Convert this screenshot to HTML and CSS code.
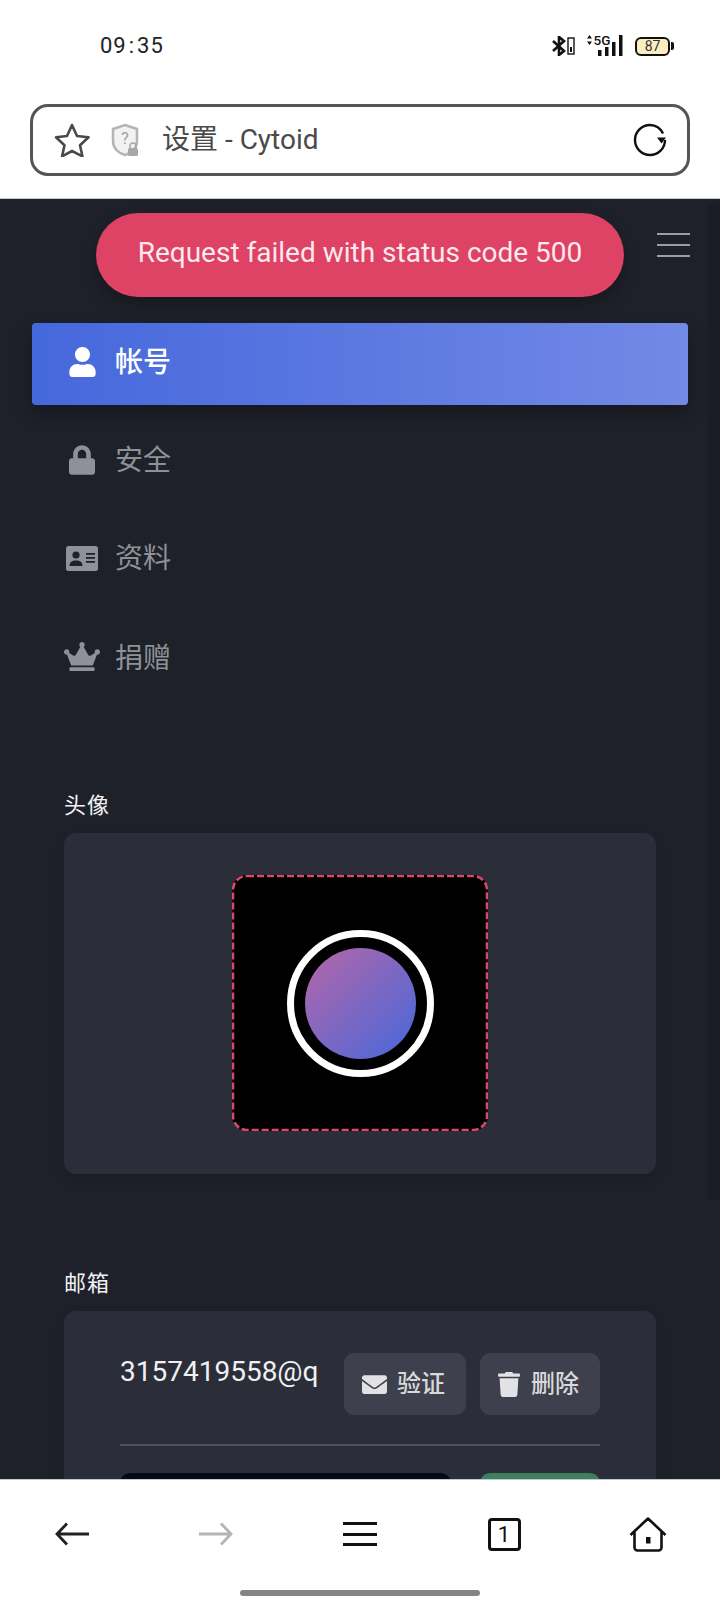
FILE: index.html
```html
<!DOCTYPE html>
<html lang="zh">
<head>
<meta charset="utf-8">
<title>设置 - Cytoid</title>
<link rel="stylesheet" href="styles.css">
</head>
<body>
<div class="phone">
  <header class="chrome">
    <div class="status">
      <span class="time">09<span class="colon">:</span>35</span>
      <div class="status-icons">
        <svg class="ic-bt" viewBox="0 0 24 20"><path d="M1 5l11 10-5 4V1l5 4L1 15" fill="none" stroke="#111" stroke-width="2.600"/><rect x="16" y="2" width="6" height="16" fill="none" stroke="#111" stroke-width="1.400"/><rect x="18" y="11" width="2" height="5" fill="#111"/></svg>
        <svg class="ic-sig" viewBox="0 -4 38 26"><path d="M1 4.500l2.500-3.500L6 4.500zM1 7.500l2.500 3.500L6 7.500z" fill="#111"/><text x="7.500" y="10.500" class="sig-text">5G</text><rect x="12" y="16" width="3.500" height="6" fill="#111"/><rect x="19" y="13" width="3.500" height="9" fill="#111"/><rect x="26" y="8" width="3.500" height="14" fill="#111"/><rect x="33" y="1" width="3.500" height="21" fill="#111"/></svg>
        <div class="battery"><span class="batt-body">87</span><span class="batt-nub"></span></div>
      </div>
    </div>
    <div class="urlbar">
      <svg class="ic-star" viewBox="0 0 36 34"><path d="M18 2l5 11 11.500 1.300-8.500 8 2.400 11L18 28l-9.900 5.300 2.400-11-8.500-8L13 13z" fill="none" stroke="#4a4a4a" stroke-width="2.600" stroke-linejoin="round"/></svg>
      <svg class="ic-shield" viewBox="0 0 30 34"><path d="M15 2l12 4v12c0 7-5 12-12 14C8 30 3 25 3 18V6z" fill="#f2f2f2" stroke="#b5b5b5" stroke-width="2.500"/><text x="15" y="21" class="shield-q">?</text><rect x="18" y="25" width="10" height="8" rx="1.500" fill="#a8a8a8"/><path d="M20 25v-2a3 3 0 016 0v2" fill="none" stroke="#a8a8a8" stroke-width="1.500"/></svg>
      <span class="url-title">设置 - Cytoid</span>
      <svg class="ic-reload" viewBox="0 0 34 34"><path d="M17 2a15 15 0 1 0 15 15" fill="none" stroke="#111" stroke-width="2.400"/><path d="M17 2a15 15 0 0 1 13 8.500" fill="none" stroke="#111" stroke-width="2.400"/><path d="M24 14.500h9l-4.500 6z" fill="#111"/></svg>
    </div>
  </header>

  <main class="page">
    <div class="toast">Request failed with status code 500</div>
    <div class="scroll-thumb"></div>
    <div class="topbar"><div class="burger"><i></i><i></i><i></i></div></div>
    <nav class="nav">
      <a class="nav-item active"><span class="nav-icon"><svg class="i-user" viewBox="0 0 448 512"><path d="M224 256c70.700 0 128-57.300 128-128S294.700 0 224 0 96 57.300 96 128s57.300 128 128 128zm89.600 32h-16.700c-22.200 10.200-46.900 16-72.900 16s-50.600-5.800-72.900-16h-16.700C60.200 288 0 348.200 0 422.400V464c0 26.500 21.500 48 48 48h352c26.500 0 48-21.500 48-48v-41.600c0-74.200-60.200-134.400-134.400-134.400z"/></svg></span><span class="nav-text">帐号</span></a>
      <a class="nav-item"><span class="nav-icon"><svg class="i-lock" viewBox="0 0 448 512"><path d="M400 224h-24v-72C376 68.200 307.800 0 224 0S72 68.200 72 152v72H48c-26.500 0-48 21.500-48 48v192c0 26.500 21.500 48 48 48h352c26.500 0 48-21.500 48-48V272c0-26.500-21.500-48-48-48zm-104 0H152v-72c0-39.700 32.300-72 72-72s72 32.300 72 72v72z"/></svg></span><span class="nav-text">安全</span></a>
      <a class="nav-item"><span class="nav-icon"><svg class="i-id" viewBox="0 0 32 25"><rect width="32" height="25" rx="2.500"/><circle cx="10" cy="9" r="3.600" class="cut"/><path d="M3.500 20c0-4 2.500-5.500 6.500-5.500s6.500 1.500 6.500 5.500z" class="cut"/><rect x="20" y="7" width="9" height="1.800" class="cut"/><rect x="20" y="11" width="9" height="1.800" class="cut"/><rect x="20" y="15" width="9" height="1.800" class="cut"/></svg></span><span class="nav-text">资料</span></a>
      <a class="nav-item"><span class="nav-icon"><svg class="i-crown" viewBox="0 0 640 512"><path d="M528 448H112c-8.800 0-16 7.200-16 16v32c0 8.800 7.200 16 16 16h416c8.800 0 16-7.200 16-16v-32c0-8.800-7.200-16-16-16zm64-320c-26.500 0-48 21.500-48 48 0 7.100 1.600 13.700 4.400 19.800L476 239.200c-15.400 9.200-35.300 4-44.200-11.600L350.300 85C361 76.200 368 63 368 48c0-26.500-21.500-48-48-48s-48 21.500-48 48c0 15 7 28.200 17.600 37l-81.500 142.600c-8.900 15.600-28.900 20.800-44.200 11.600l-72.300-43.400c2.700-6 4.400-12.700 4.400-19.800 0-26.500-21.500-48-48-48S0 149.500 0 176s21.500 48 48 48c2.600 0 5.200-.4 7.700-.8L128 416h384l72.300-192.800c2.500.4 5.100.8 7.700.8 26.500 0 48-21.500 48-48s-21.500-48-48-48z"/></svg></span><span class="nav-text">捐赠</span></a>
    </nav>

    <section class="section first">
      <h2 class="label">头像</h2>
      <div class="card avatar-card">
        <div class="avatar">
          <svg class="dash" viewBox="0 0 256 256"><rect x="1" y="1" width="254" height="254" rx="14" fill="none" stroke="#e0466a" stroke-width="2.500" stroke-dasharray="7 3"/></svg>
          <div class="ring"><div class="disc"></div></div>
        </div>
      </div>
    </section>

    <section class="section second">
      <h2 class="label">邮箱</h2>
      <div class="card email-card">
        <div class="email-row">
          <div class="email">3157419558@q</div>
          <button class="btn verify"><svg class="i-mail" viewBox="0 0 512 384"><path d="M502.300 126.800c3.900-3.100 9.700-.2 9.700 4.700V336c0 26.500-21.500 48-48 48H48c-26.500 0-48-21.500-48-48V131.600c0-5 5.700-7.800 9.700-4.700 22.400 17.400 52.100 39.500 154.100 113.600 21.100 15.400 56.700 47.800 92.200 47.600 35.700.3 72-32.800 92.300-47.600 102-74.100 131.600-96.300 154-113.700zM256 256c23.200.4 56.600-29.200 73.400-41.400 132.700-96.300 142.800-104.700 173.400-128.700 5.800-4.500 9.200-11.500 9.200-18.900V48c0-26.500-21.500-48-48-48H48C21.500 0 0 21.500 0 48v19c0 7.400 3.400 14.300 9.200 18.900 30.600 23.900 40.700 32.400 173.400 128.700 16.800 12.200 50.200 41.800 73.400 41.400z"/></svg><span class="btn-text">验证</span></button>
          <button class="btn remove"><svg class="i-trash" viewBox="0 0 448 512"><path d="M432 32H312l-9.400-18.700A24 24 0 0 0 281.100 0H166.800a23.720 23.720 0 0 0-21.400 13.300L136 32H16A16 16 0 0 0 0 48v32a16 16 0 0 0 16 16h416a16 16 0 0 0 16-16V48a16 16 0 0 0-16-16zM53.200 467a48 48 0 0 0 47.900 45h245.800a48 48 0 0 0 47.900-45L416 128H32z"/></svg><span class="btn-text">删除</span></button>
        </div>
        <div class="divider"></div>
        <div class="add-row">
          <div class="input"></div>
          <div class="add-btn"></div>
        </div>
      </div>
    </section>
  </main>

  <footer class="bottom">
    <div class="tools">
      <div class="tool"><svg class="t-arrow" viewBox="0 0 34 24"><path d="M12 1.500L2 12l10 10.500M2 12h32" fill="none" stroke="#222" stroke-width="2.800"/></svg></div>
      <div class="tool"><svg class="t-arrow" viewBox="0 0 34 24"><path d="M22 1.500L32 12 22 22.500M32 12H0" fill="none" stroke="#b4b4b4" stroke-width="2.800"/></svg></div>
      <div class="tool"><div class="t-menu"><i></i><i></i><i></i></div></div>
      <div class="tool"><span class="t-tab">1</span></div>
      <div class="tool"><svg class="t-home" viewBox="0 0 38 35"><path d="M1.500 18L19 1.500 36.500 18M5.500 15v15.500a3 3 0 0 0 3 3h21a3 3 0 0 0 3-3V15" fill="none" stroke="#111" stroke-width="2.600" stroke-linejoin="round"/><rect x="17" y="20" width="4.500" height="6.500" fill="#111"/></svg></div>
    </div>
    <div class="home-bar"></div>
  </footer>
</div>
</body>
</html>
```

FILE: styles.css
```css
* { box-sizing: border-box; }
html, body { margin: 0; padding: 0; background: #fff; }
body { font-family: Roboto, "Noto Sans CJK SC", sans-serif; }
.phone { width: 720px; height: 1600px; display: flex; flex-direction: column; overflow: hidden; }

.chrome { height: 199px; flex: none; background: #fff; border-bottom: 1px solid #c9ccd0; }
.status { height: 104px; display: flex; justify-content: space-between; padding: 30px 46px 0 100px; align-items: flex-start; }
.time { font-size: 22px; line-height: 32px; letter-spacing: 1px; color: #222; }
.colon { padding: 0 2px; }
.status-icons { display: flex; align-items: center; height: 32px; }
.ic-bt { width: 24px; height: 20px; margin-right: 10px; }
.ic-sig { width: 38px; height: 26px; margin-right: 11px; margin-top: -6px; }
.sig-text { font-family: Roboto, sans-serif; font-size: 13.500px; font-weight: 500; fill: #111; }
.battery { display: flex; align-items: center; }
.batt-body { width: 35px; height: 19px; border: 2px solid #111; border-radius: 6px; background: #fdeec0; font-size: 14px; line-height: 15px; text-align: center; color: #333; }
.batt-nub { width: 3px; height: 8px; background: #111; margin-left: 1px; border-radius: 0 2px 2px 0; }

.urlbar { height: 72px; margin: 0 30px; border: 3px solid #555; border-radius: 18px; display: flex; align-items: center; padding: 0 20px 0 21px; }
.ic-star { width: 36px; height: 34px; flex: none; }
.ic-shield { width: 30px; height: 34px; flex: none; margin-left: 20px; }
.shield-q { font-family: Roboto, sans-serif; font-size: 16px; fill: #a0a0a0; text-anchor: middle; }
.url-title { font-size: 28px; line-height: 40px; color: #4a4a4a; margin-left: 22px; flex: 1; }
.ic-reload { width: 34px; height: 34px; flex: none; }

.page { position: relative; flex: 1; min-height: 0; overflow: hidden; background: #1e2129; }
.toast { position: absolute; left: 96px; top: 14px; width: 528px; height: 84px; border-radius: 42px; background: #de4264; color: #fbe9ed; font-size: 28px; line-height: 80px; text-align: center; box-shadow: 0 8px 16px rgba(0, 0, 0, .25); z-index: 3; }
.scroll-thumb { position: absolute; right: 0; top: 4px; width: 12px; height: 997px; background: #1a1d24; }
.topbar { height: 124px; display: flex; justify-content: flex-end; padding: 34px 30px 0 0; }
.burger { width: 33px; display: flex; flex-direction: column; gap: 9px; }
.burger i { display: block; height: 2px; background: #9a9da3; }

.nav { margin: 0 32px; display: flex; flex-direction: column; gap: 16px; }
.nav-item { height: 82px; display: flex; align-items: center; gap: 15px; padding: 0 0 4px 32px; color: #8e9197; font-size: 28px; font-family: "Noto Sans CJK SC", sans-serif; }
.nav-item.active { background: linear-gradient(90deg, #4568dc, #7389e6); color: #fff; font-weight: 500; border-radius: 4px; box-shadow: 0 8px 20px rgba(0, 0, 0, .3); }
.nav-text { margin-bottom: 4px; }
.nav-item:last-child .nav-text { margin-bottom: 0; }
.nav-icon { width: 36px; display: flex; justify-content: center; }
.nav-icon svg { fill: currentColor; display: block; }
.i-user { width: 29px; height: 30px; }
.i-lock { width: 26px; height: 30px; }
.i-id { width: 32px; height: 25px; }
.i-id .cut { fill: #1e2129; }
.i-crown { width: 36px; height: 29px; }

.section { margin: 0 64px; }
.section.first { padding-top: 89px; }
.section.second { padding-top: 92px; }
.label { margin: 0 0 15px; font-size: 22px; line-height: 30px; font-weight: 400; letter-spacing: 1px; color: #f2f2f4; font-family: "Noto Sans CJK SC", sans-serif; }
.card { background: #2b2e38; border-radius: 12px; box-shadow: 0 6px 14px rgba(0, 0, 0, .12); }

.avatar-card { height: 341px; padding-top: 42px; display: flex; justify-content: center; align-items: flex-start; }
.avatar { position: relative; width: 256px; height: 256px; background: #000; border-radius: 15px; display: flex; align-items: center; justify-content: center; }
.dash { position: absolute; inset: 0; width: 256px; height: 256px; }
.ring { width: 147px; height: 147px; border: 7px solid #fff; border-radius: 50%; display: flex; align-items: center; justify-content: center; }
.disc { width: 111px; height: 111px; border-radius: 50%; background: linear-gradient(135deg, #b766a8, #4568dc); }

.email-card { padding: 42px 56px 0; height: 300px; }
.email-row { display: flex; align-items: flex-start; }
.email { width: 197px; flex: none; white-space: nowrap; font-size: 28px; line-height: 38px; color: #f0f0f2; margin-right: 27px; }
.btn { height: 62px; border: 0; border-radius: 10px; background: #3e404d; color: #d9d9dc; font-size: 24px; font-family: "Noto Sans CJK SC", sans-serif; font-weight: 500; display: flex; align-items: center; padding: 0; }
.btn-text { margin-bottom: 5px; }
.btn svg { fill: #e2e2e5; flex: none; }
.verify { width: 122px; padding-left: 18px; }
.remove { width: 120px; margin-left: 14px; padding-left: 18px; }
.i-mail { width: 25px; height: 19px; margin-right: 10px; }
.i-trash { width: 22px; height: 25px; margin-right: 11px; }
.divider { height: 2px; background: #4d505d; margin-top: 29px; }
.add-row { display: flex; justify-content: space-between; margin-top: 27px; }
.input { width: 331px; height: 60px; background: #070a16; border-radius: 10px; }
.add-btn { width: 120px; height: 60px; background: #3d7f5f; border-radius: 10px; }

.bottom { height: 121px; flex: none; background: #fff; border-top: 1px solid #c4c7cc; display: flex; flex-direction: column; align-items: center; position: relative; z-index: 2; }
.tools { width: 100%; display: flex; padding-top: 36px; height: 110px; }
.tool { flex: 1; height: 36px; display: flex; align-items: center; justify-content: center; }
.t-arrow { width: 34px; height: 24px; }
.t-menu { width: 34px; display: flex; flex-direction: column; gap: 7.500px; }
.t-menu i { display: block; height: 3px; background: #111; }
.t-tab { width: 33px; height: 33px; border: 3px solid #111; border-radius: 4px; font-size: 22px; line-height: 27px; text-align: center; color: #111; }
.t-home { width: 38px; height: 35px; }
.home-bar { width: 240px; height: 6px; border-radius: 3px; background: #858585; }
```
